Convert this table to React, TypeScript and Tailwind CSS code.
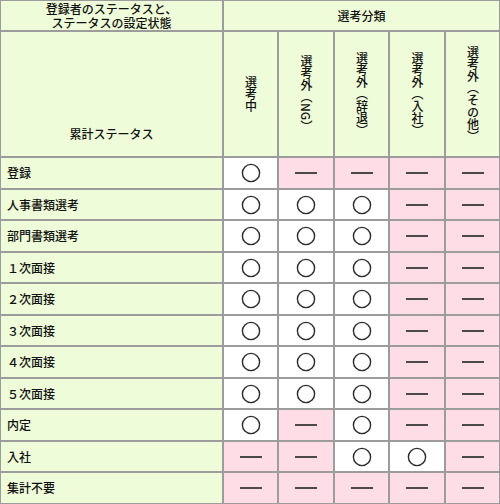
import React from "react";

type Mark = "o" | "-";

const rows: { label: string; marks: Mark[] }[] = [
  { label: "登録", marks: ["o", "-", "-", "-", "-"] },
  { label: "人事書類選考", marks: ["o", "o", "o", "-", "-"] },
  { label: "部門書類選考", marks: ["o", "o", "o", "-", "-"] },
  { label: "１次面接", marks: ["o", "o", "o", "-", "-"] },
  { label: "２次面接", marks: ["o", "o", "o", "-", "-"] },
  { label: "３次面接", marks: ["o", "o", "o", "-", "-"] },
  { label: "４次面接", marks: ["o", "o", "o", "-", "-"] },
  { label: "５次面接", marks: ["o", "o", "o", "-", "-"] },
  { label: "内定", marks: ["o", "-", "o", "-", "-"] },
  { label: "入社", marks: ["-", "-", "o", "o", "-"] },
  { label: "集計不要", marks: ["-", "-", "-", "-", "-"] },
];

const heads = ["選考中", "選考外（NG）", "選考外（辞退）", "選考外（入社）", "選考外（その他）"];

function Circle() {
  return (
    <svg width="20" height="20" viewBox="0 0 20 20">
      <circle cx="10" cy="10" r="8.6" fill="none" stroke="#2a2a2a" strokeWidth="1.4" />
    </svg>
  );
}

function Dash() {
  return (
    <svg width="22" height="4" viewBox="0 0 22 4">
      <rect x="0" y="1" width="22" height="2" fill="#4a4a4a" />
    </svg>
  );
}

export default function App() {
  const font = { fontFamily: '"Noto Sans CJK JP", "Noto Sans", sans-serif' };
  return (
    <div className="w-[500px] h-[504px] bg-white" style={font}>
      <div className="grid w-[500px] grid-cols-[221px_53px_54px_53px_54px_53px] grid-rows-[29px_124px_30px_29px_30px_29px_30px_29px_30px_29px_30px_29px_30px] gap-[2px] p-[1px] bg-[#9c9c9c] text-[12px] text-[#111] font-medium">
        <div className="bg-[#effcd9] flex flex-col items-center justify-center leading-[14px] text-center">
          <span className="block h-[14px]">登録者のステータスと、</span>
          <span className="block h-[14px]">ステータスの設定状態</span>
        </div>
        <div className="col-span-5 bg-[#effcd9] flex items-center justify-center">選考分類</div>
        <div className="bg-[#effcd9] flex items-end justify-center pb-[13px]">累計ステータス</div>
        {heads.map((h) => (
          <div key={h} className="bg-[#effcd9] flex items-center justify-center">
            <span className="[writing-mode:vertical-rl] leading-[14px]">{h}</span>
          </div>
        ))}
        {rows.map((r) => (
          <React.Fragment key={r.label}>
            <div className="bg-[#effcd9] flex items-center pl-[6px]">{r.label}</div>
            {r.marks.map((m, i) => (
              <div
                key={i}
                className={
                  m === "o"
                    ? "bg-white flex items-center justify-center"
                    : "bg-[#ffdde6] flex items-center justify-center"
                }
              >
                {m === "o" ? <Circle /> : <Dash />}
              </div>
            ))}
          </React.Fragment>
        ))}
      </div>
    </div>
  );
}
